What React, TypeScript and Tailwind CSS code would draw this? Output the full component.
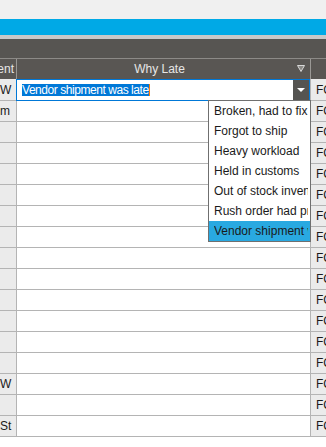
import React from "react";

const options = [
  "Broken, had to fix",
  "Forgot to ship",
  "Heavy workload",
  "Held in customs",
  "Out of stock inventory",
  "Rush order had priority",
  "Vendor shipment was late",
];

const leftText: Record<number, string> = { 1: "m", 14: "W", 16: "St" };

export default function App() {
  const rows = Array.from({ length: 17 }, (_, i) => i);
  return (
    <div className="relative w-[326px] h-[447px] overflow-hidden bg-white font-['Liberation_Sans',Arial,sans-serif] text-[12px] text-[#1a1a1a]">
      <div className="h-[19px] bg-[#f0f0f0]" />
      <div className="h-[16px] bg-[#00a9e6]" />
      <div className="h-[4px] bg-[#c8c8c8]" />
      <div className="h-[19px] bg-[#575552]" />
      {/* header */}
      <div className="flex h-[21px] bg-[#595653] border-t border-[#8c8a87] text-[#e6e6e6]">
        <div className="w-[17px] border-r border-[#9a9895] flex justify-end items-center overflow-hidden pr-[2px]">
          ent
        </div>
        <div className="w-[293px] relative flex items-center justify-center pr-[8px]">
          Why Late
          <svg className="absolute right-[5px] top-[6px]" width="8" height="7" viewBox="0 0 8 7">
            <path d="M0.5 0.5 H7.5 L4 6.5 Z" fill="#8a8884" stroke="#d8d8d8" strokeWidth="1" />
          </svg>
        </div>
        <div className="w-[16px] border-l border-[#9a9895]" />
      </div>
      {/* editing row */}
      <div className="flex h-[22px]">
        <div className="w-[16px] bg-[#ebebeb] flex items-center overflow-hidden border-b border-[#b4b4b4]">W</div>
        <div className="w-[294px] border border-[#0078d7] bg-white flex items-center">
          <div className="flex-1 flex items-center pl-[5px]">
            <span className="bg-[#0078d7] text-white leading-[12px] tracking-[-0.45px]">Vendor shipment was late</span>
            <span className="w-[1px] h-[12px] bg-[#ff7a00]" />
          </div>
          <div className="w-[16px] h-full bg-[#555451] flex items-center justify-center">
            <svg width="8" height="4" viewBox="0 0 8 4">
              <path d="M0 0 H8 L4 4 Z" fill="#ffffff" />
            </svg>
          </div>
        </div>
        <div className="w-[16px] bg-[#ebebeb] border-l border-[#b4b4b4] border-b flex items-center pl-[5px] overflow-hidden whitespace-nowrap">
          FC
        </div>
      </div>
      {rows.slice(1).map((i) => (
        <div key={i} className="flex h-[21px] border-b border-[#b4b4b4]">
          <div className="w-[17px] bg-[#ebebeb] border-r border-[#b4b4b4] flex items-center overflow-hidden whitespace-nowrap">
            {leftText[i] ?? ""}
          </div>
          <div className="w-[293px] bg-white" />
          <div className="w-[16px] bg-[#ebebeb] border-l border-[#b4b4b4] flex items-center pl-[5px] overflow-hidden whitespace-nowrap">
            FC
          </div>
        </div>
      ))}
      {/* dropdown list */}
      <div className="absolute left-[208px] top-[100px] w-[103px] border border-[#6f6f6f] bg-white">
        {options.map((o, i) => (
          <div
            key={o}
            className={`h-[20px] pl-[5px] pr-[2px] flex items-center ${
              i === options.length - 1 ? "bg-[#29a9e1]" : ""
            }`}
          >
            <span className="block w-full overflow-hidden whitespace-nowrap">{o}</span>
          </div>
        ))}
      </div>
    </div>
  );
}
